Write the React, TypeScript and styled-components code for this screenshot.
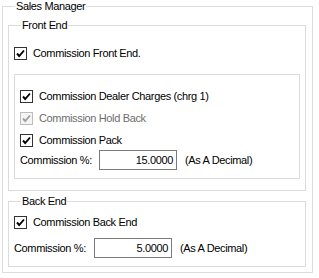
import { FC } from "react";
import styled, { createGlobalStyle } from "styled-components";

const GlobalStyle = createGlobalStyle`
  html, body {
    margin: 0;
    padding: 0;
    background: #ffffff;
  }
  body {
    font-family: "Liberation Sans", Arial, sans-serif;
    font-size: 11px;
    letter-spacing: -0.35px;
    color: #000;
  }
`;

// styled components
const Page = styled.div`
  width: 319px;
  height: 278px;
  padding: 0 0 0 2px;
  box-sizing: border-box;
`;

const Group = styled.fieldset<{ $pad: string; $top?: number }>`
  margin: ${(p) => p.$top ?? 0}px 0 0 0;
  min-width: 0;
  padding: ${(p) => p.$pad};
  border: 1px solid #dcdcdc;
  display: flex;
  flex-direction: column;
`;

const OuterGroup = styled(Group)`
  width: 311px;
  box-sizing: border-box;
`;

const Legend = styled.legend`
  padding: 0 1px;
  margin-left: 7px;
  line-height: 13px;
  height: 13px;
`;

const Panel = styled.div`
  border: 1px solid #dcdcdc;
  margin-top: 14px;
  padding: 14px 5px 8px 5px;
  display: flex;
  flex-direction: column;
  gap: 8px;
`;

const CheckRow = styled.label<{ $disabled?: boolean }>`
  display: flex;
  align-items: center;
  gap: 6px;
  height: 14px;
  line-height: 14px;
  white-space: nowrap;
  color: ${(p) => (p.$disabled ? "#6d6d6d" : "#000")};
`;

const Box = styled.span<{ $disabled?: boolean }>`
  width: 13px;
  height: 13px;
  box-sizing: border-box;
  border: 1px solid ${(p) => (p.$disabled ? "#bcbcbc" : "#333")};
  background: ${(p) => (p.$disabled ? "#f4f4f4" : "#fff")};
  display: flex;
  flex: none;
`;

const FieldRow = styled.div<{ $labelWidth: number; $top?: number }>`
  display: grid;
  grid-template-columns: ${(p) => p.$labelWidth}px 78px auto;
  align-items: center;
  margin-top: ${(p) => p.$top ?? 0}px;
  white-space: nowrap;
`;

const Input = styled.div`
  height: 20px;
  box-sizing: border-box;
  border: 1px solid #7a7a7a;
  background: #fff;
  text-align: right;
  padding: 0 3px;
  line-height: 18px;
`;

const Hint = styled.span`
  padding-left: 8px;
`;

const Check: FC<{ label: string; disabled?: boolean }> = ({ label, disabled }) => (
  <CheckRow $disabled={disabled}>
    <Box $disabled={disabled}>
      <svg width="11" height="11" viewBox="0 0 11 11">
        <polyline
          points="2,5.5 4.2,8 9,2.5"
          fill="none"
          stroke={disabled ? "#a0a0a0" : "#000"}
          strokeWidth="1.9"
        />
      </svg>
    </Box>
    {label}
  </CheckRow>
);

const App: FC = () => (
  <>
    <GlobalStyle />
    <Page>
      <OuterGroup $pad="6px 6px 5px 5px">
        <Legend>Sales Manager</Legend>

        <Group $pad="14px 5px 11px 5px">
          <Legend>Front End</Legend>
          <Check label="Commission Front End." />
          <Panel>
            <Check label="Commission Dealer Charges (chrg 1)" />
            <Check label="Commission Hold Back" disabled />
            <Check label="Commission Pack" />
            <FieldRow $labelWidth={79} $top={-5}>
              <span>Commission %:</span>
              <Input>15.0000</Input>
              <Hint>(As A Decimal)</Hint>
            </FieldRow>
          </Panel>
        </Group>

        <Group $pad="7px 5px 8px 5px" $top={4}>
          <Legend>Back End</Legend>
          <Check label="Commission Back End" />
          <FieldRow $labelWidth={80} $top={9}>
            <span>Commission %:</span>
            <Input>5.0000</Input>
            <Hint>(As A Decimal)</Hint>
          </FieldRow>
        </Group>
      </OuterGroup>
    </Page>
  </>
);

export default App;
